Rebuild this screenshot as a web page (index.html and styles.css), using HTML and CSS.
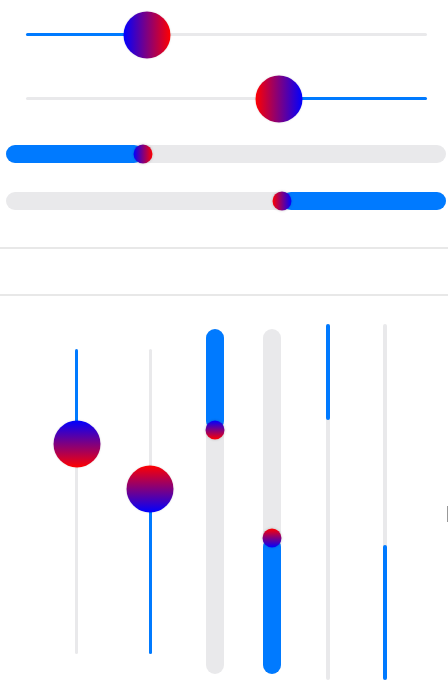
FILE: index.html
```html
<html>
<head>
<link rel="stylesheet" href="styles.css">
</head>
<body>
<div class="horizontal">
  <div class="hslider row-1">
    <div class="track thin">
      <div class="fill" style="left: 0; width: 120.5px"></div>
      <div class="thumb big to-right" style="left: 120.5px"></div>
    </div>
  </div>
  <div class="hslider row-2">
    <div class="track thin">
      <div class="fill" style="left: 252.5px; right: 0"></div>
      <div class="thumb big to-left" style="left: 252.5px"></div>
    </div>
  </div>
  <div class="hslider wide row-3">
    <div class="track thick">
      <div class="fill" style="left: 0; width: 136.5px"></div>
      <div class="thumb small to-right" style="left: 136.5px"></div>
    </div>
  </div>
  <div class="hslider wide row-4">
    <div class="track thick">
      <div class="fill" style="left: 275.5px; right: 0"></div>
      <div class="thumb small to-left" style="left: 275.5px"></div>
    </div>
  </div>
</div>

<div class="divider first"></div>
<div class="divider second"></div>

<div class="vertical">
  <div class="vslider col-1">
    <div class="vtrack thin">
      <div class="fill" style="top: 0; height: 95.5px"></div>
      <div class="thumb big to-bottom" style="top: 95.5px"></div>
    </div>
  </div>
  <div class="vslider col-2">
    <div class="vtrack thin">
      <div class="fill" style="top: 140.5px; bottom: 0"></div>
      <div class="thumb big to-top" style="top: 140.5px"></div>
    </div>
  </div>
  <div class="vslider col-3">
    <div class="vtrack thick">
      <div class="fill" style="top: 0; height: 101.5px"></div>
      <div class="thumb small to-bottom" style="top: 101.5px"></div>
    </div>
  </div>
  <div class="vslider col-4">
    <div class="vtrack thick">
      <div class="fill" style="top: 209px; bottom: 0"></div>
      <div class="thumb small to-top" style="top: 209px"></div>
    </div>
  </div>
  <div class="vslider col-5">
    <div class="vtrack bar">
      <div class="fill" style="top: 0; height: 96px"></div>
    </div>
  </div>
  <div class="vslider col-6">
    <div class="vtrack bar">
      <div class="fill" style="top: 221px; bottom: 0"></div>
    </div>
  </div>
  <div class="edge-mark"></div>
</div>
</body>
</html>
```

FILE: styles.css
```css
body {
margin: 0;
background: #fff;
font-family: "Liberation Sans", Arial, sans-serif;
overflow: hidden;
}

.horizontal {
padding-top: 11px;
}

.hslider {
display: flex;
align-items: center;
margin: 0 21px 0 26px;
height: 47px;
}

.hslider.row-2 {
margin-top: 17px;
}

.hslider.wide {
margin: 0 2px 0 6px;
height: 19px;
}

.hslider.row-3 {
margin-top: 22.5px;
}

.hslider.row-4 {
margin-top: 28px;
}

.track {
position: relative;
width: 100%;
background: #e9e9eb;
}

.track.thin {
height: 3px;
border-radius: 2px;
}

.track.thick {
height: 18px;
border-radius: 9px;
}

.fill {
position: absolute;
background: #007aff;
border-radius: inherit;
}

.track .fill {
top: 0;
bottom: 0;
}

.vtrack .fill {
left: 0;
right: 0;
}

.thumb {
position: absolute;
border-radius: 50%;
transform: translate(-50%, -50%);
box-shadow: 0 0 2px rgba(0, 0, 0, .15);
}

.track .thumb {
top: 50%;
}

.vtrack .thumb {
left: 50%;
}

.thumb.big {
width: 47px;
height: 47px;
}

.thumb.small {
width: 19px;
height: 19px;
box-shadow: 0 0 3px rgba(0, 0, 0, .2);
}

.to-right { background: linear-gradient(to right, #0000ff, #ff0000); }
.to-left { background: linear-gradient(to left, #0000ff, #ff0000); }
.to-bottom { background: linear-gradient(to bottom, #0000ff, #ff0000); }
.to-top { background: linear-gradient(to top, #0000ff, #ff0000); }

.divider {
height: 2px;
background: #e8e8e8;
}

.divider.first {
margin-top: 36px;
}

.divider.second {
margin-top: 45px;
}

.vertical {
display: flex;
align-items: flex-start;
}

.vslider {
display: flex;
justify-content: center;
}

.vtrack {
position: relative;
background: #e9e9eb;
}

.vtrack.thin {
width: 3px;
height: 305px;
border-radius: 2px;
}

.vtrack.thick {
width: 18px;
height: 345px;
border-radius: 9px;
}

.vtrack.bar {
width: 4px;
height: 356px;
border-radius: 2px;
}

.col-1 { width: 47px; margin: 53px 0 0 53px; }
.col-2 { width: 47px; margin: 53px 0 0 26.5px; }
.col-3 { width: 18px; margin: 33px 0 0 32.5px; }
.col-4 { width: 18px; margin: 33px 0 0 38.5px; }
.col-5 { width: 4px; margin: 28px 0 0 45.5px; }
.col-6 { width: 4px; margin: 28px 0 0 53px; }

.edge-mark {
width: 1px;
height: 16px;
margin: 210px 0 0 60px;
background: #999;
flex-shrink: 0;
}
```
